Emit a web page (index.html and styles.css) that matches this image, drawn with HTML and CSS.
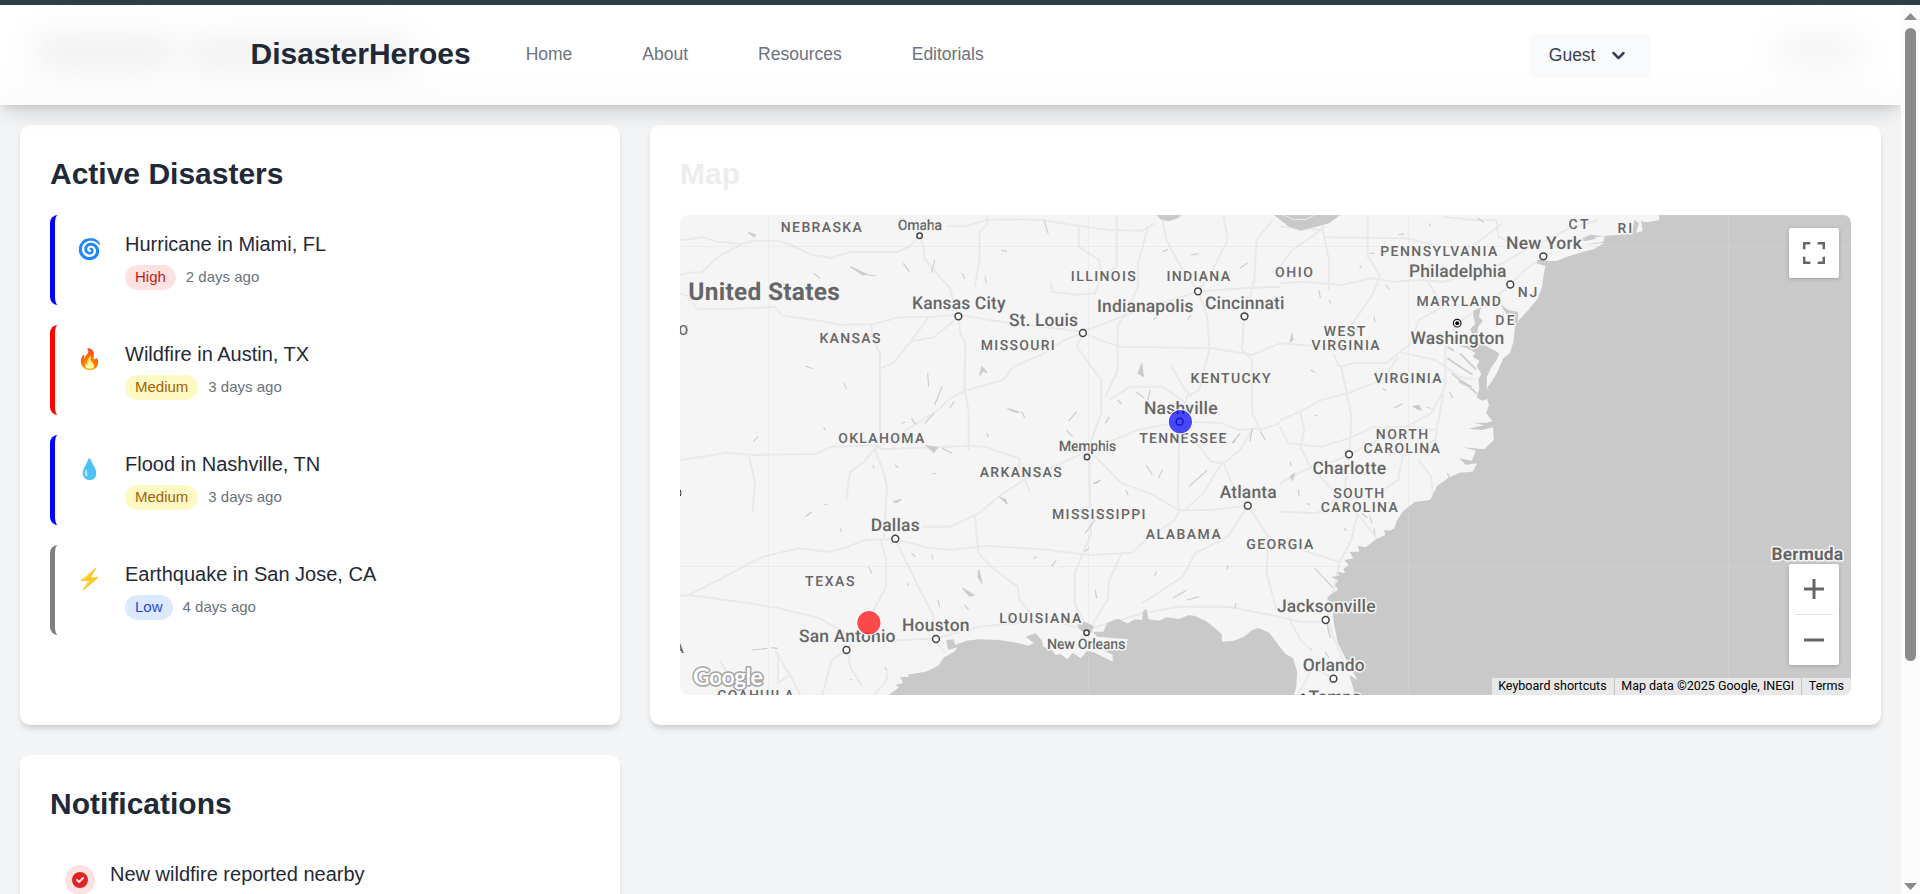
FILE: index.html
```html
<!DOCTYPE html>
<html lang="en">
<head>
<meta charset="utf-8">
<title>DisasterHeroes</title>
<link rel="stylesheet" href="styles.css">
</head>
<body>
<div class="top-strip"></div>
<div class="viewport">
  <div class="page">
    <header class="header">
      <span class="glow glow-left"></span>
      <span class="glow glow-mid"></span>
      <span class="glow glow-right"></span>
      <div class="header-inner">
        <a class="brand">DisasterHeroes</a>
        <nav class="nav">
          <a>Home</a><a>About</a><a>Resources</a><a>Editorials</a>
        </nav>
        <button class="guest">Guest
          <svg width="25" height="25" viewBox="0 0 20 20"><path fill="currentColor" fill-rule="evenodd" d="M5.293 7.293a1 1 0 011.414 0L10 10.586l3.293-3.293a1 1 0 111.414 1.414l-4 4a1 1 0 01-1.414 0l-4-4a1 1 0 010-1.414z"/></svg>
        </button>
      </div>
    </header>

    <main class="grid">
      <section class="card">
        <h2>Active Disasters</h2>
        <div class="list">
          <article class="item item-blue">
            <span class="emoji">🌀</span>
            <div><h3>Hurricane in Miami, FL</h3><p><span class="badge high">High</span>2 days ago</p></div>
          </article>
          <article class="item item-red">
            <span class="emoji">🔥</span>
            <div><h3>Wildfire in Austin, TX</h3><p><span class="badge medium">Medium</span>3 days ago</p></div>
          </article>
          <article class="item item-blue">
            <span class="emoji">💧</span>
            <div><h3>Flood in Nashville, TN</h3><p><span class="badge medium">Medium</span>3 days ago</p></div>
          </article>
          <article class="item item-gray">
            <span class="emoji">⚡</span>
            <div><h3>Earthquake in San Jose, CA</h3><p><span class="badge low">Low</span>4 days ago</p></div>
          </article>
        </div>
      </section>

      <section class="card">
        <h2 class="faint">Map</h2>
        <div class="map">
          <svg class="map-svg" width="1171" height="480" viewBox="680 215 1171 480">
            <rect class="land" x="680" y="215" width="1171" height="480"/>
            <g transform="translate(640 200) scale(.408163 .333333)">
              <!-- Interstates, western half -->
              <g class="road">
                <path d="M98 121 155 112 190 125 250 132 280 122 340 122 375 138 420 165 470 174 515 156 630 156 660 140 685 107"/>
                <path d="M98 224 120 218 152 217 175 190 195 168 250 133"/>
                <path d="M98 280 120 290 140 328 235 326 330 321 350 347 430 360 490 374 570 373 635 352 705 351 780 345 900 368 1085 395"/>
                <path d="M685 107 695 140 697 175 720 210 760 265 765 290 780 349 785 400 797 430 795 570 805 630 805 750"/>
                <path d="M750 79 800 78 850 60 920 58 985 60 1060 75 1150 90 1230 92 1260 70"/>
                <path d="M850 45 850 75 832 95 832 180 820 260"/>
                <path d="M568 373 568 410 588 460 588 710 575 745"/>
                <path d="M588 505 620 490 660 430 705 355M660 425 720 412 780 350"/>
                <path d="M98 780 165 768 210 758 280 765 430 762 470 740 575 735 595 748 800 738 850 740 870 752 930 775 930 800 955 875"/>
                <path d="M1085 399 1040 420 990 460 915 500 890 540 800 570 760 595 730 630 640 700 575 745"/>
                <path d="M268 770 275 810 282 850 275 940"/>
                <path d="M575 745 550 785 515 815 505 900M575 745 598 820 605 860 598 1015"/>
                <path d="M1085 399 1070 440 1130 540 1130 640 1100 740 1105 1000 1065 1120 1065 1210 1085 1260"/>
                <path d="M1085 399 1150 430 1180 440 1400 445 1500 465 1568 430"/>
                <path d="M1005 245 1010 275 1070 284 1115 280 1130 230 1125 180 1075 140 1075 80M1168 45 1168 200 1120 240M1245 80 1220 190 1220 260 1190 340 1170 380 1170 510 1140 590"/>
                <path d="M1280 60 1290 120 1320 190 1367 274 1480 265 1568 260M1367 274 1390 350 1395 445 1370 570 1340 590 1322 665M1367 274 1180 350 1085 395"/>
                <path d="M1480 349 1475 450 1500 480 1500 640 1520 690 1568 670M1430 45 1440 120 1395 230 1367 274M1550 60 1510 120 1505 240 1480 349"/>
                <path d="M1322 665 1220 690 1140 730 940 840 890 880 830 940 760 980 690 980"/>
                <path d="M1322 665 1420 668 1470 690 1520 685M1322 665 1318 900 1320 935"/>
                <path d="M1322 665 1370 740 1400 785 1430 790 1470 750 1500 690M1430 790 1450 850 1489 917"/>
                <path d="M1100 750 1180 850 1250 880 1320 930 1400 930 1489 917M1150 600 1200 560 1280 560 1340 610M1300 495 1330 560 1350 590"/>
                <path d="M98 1187 120 1185 200 1135 300 1070 390 1045 460 1055 500 1045 550 1020 625 1018 700 1042 760 1050 850 1037 1000 1050 1100 1065 1205 1058 1240 1020 1310 960 1320 935"/>
                <path d="M120 1185 260 1208 340 1225 440 1255 505 1300 560 1325 725 1315 830 1280 1000 1260 1094 1290 1230 1240 1320 1220 1440 1220 1568 1250"/>
                <path d="M625 1018 650 1080 690 1180 720 1250 720 1320 750 1360M590 1018 603 1080 603 1160 560 1260 506 1350 470 1380 445 1490"/>
                <path d="M820 945 830 1060 860 1100 925 1160 930 1200 965 1250M1180 1060 1150 1140 1145 1200 1110 1270M1489 917 1440 1010 1360 1060 1330 1130 1230 1210"/>
                <path d="M1489 917 1540 1010 1535 1120 1560 1230M195 1380 220 1430 250 1480M330 1350 370 1430 395 1490M338 1360V1450L365 1425M605 1420 605 1440 570 1490M510 1365 515 1400 545 1460M1330 935 1380 880 1425 790"/>
              </g>
              <!-- Interstates, eastern half -->
              <g class="road" transform="translate(1568 0)">
                <path d="M0 250 60 245 150 255 225 235 280 245 340 240 400 245 470 220 545 190 600 150 645 125 700 90 780 60"/>
                <path d="M0 80 60 85 105 90 120 180 120 270M215 45 215 170 245 225 228 280 170 385 110 440 0 430"/>
                <path d="M0 200 30 150 90 100 110 75M110 112 310 115 400 140 470 140 545 70M400 50 470 60 530 60 535 110 600 150"/>
                <path d="M645 169 600 210 564 254 520 300 434 370 405 430 405 560 370 640 310 680 270 720"/>
                <path d="M360 240 400 320 340 360 320 430 260 490 180 490 145 500 130 460M290 455 380 480 440 530 480 540"/>
                <path d="M0 660 50 635 100 600 165 580 250 540 290 470M150 500 165 590 175 650 170 763M0 680 20 730 100 740 170 715 230 680 280 690 300 720"/>
                <path d="M170 763 240 720 260 680 330 680 380 690M170 763 120 790 60 810 0 850M170 763 160 850 170 910 240 1020"/>
                <path d="M50 640 60 690 50 740 70 790 150 900 190 940M400 580 390 650 380 720 300 770 290 840 240 880M340 780 370 830 375 890"/>
                <path d="M0 935 90 940 170 870M190 940 175 1020 145 1090 130 1180 115 1250 130 1310 155 1380M0 1030 80 1060 145 1085"/>
                <path d="M0 1250 50 1265 112 1265M20 1250 50 1320 75 1350M131 1436 80 1400 60 1450 40 1490"/>
              </g>
              <!-- Small lakes and reservoirs -->
              <path class="lake" d="M265 97l18 8-4 5zM515 200l38 22-6 3zM545 222l33 6M425 220l16 14M645 190l14 24M722 180l-8 38M885 150l14 4M990 60l10 40M790 220l5 16M845 230l4 20M838 500l12 18-10-6-8 14zM705 520l2 40M405 498l18 8M500 550l5 16M740 560l-18 55M770 605l-12 20M720 640l-22 30M665 655l10 18M450 682l4 8M290 710l-12 14M700 735l20 22 10-16M740 745l25 15M905 630l20 8M935 635l8 20M900 625l30 12M1070 635l-20 28M1140 670l10-20M1270 340l-12 20M1350 345l-8 14M1280 155l14-6M1350 165l18-4M1470 205l18-16M1230 490l-10 30 15 10M1250 570l-8 40M1215 575l20 18M1470 700l-20 30 8-6M1500 685l-6 40M1520 695l12 25M1390 810l-45 50M1240 795l15 30M1280 810l-10 25M1130 840l-20 10 12-2M1115 960l-25 40M880 890l20 22-6-16M715 822l10-2M620 905l20-6-14 10M405 950l15-14M450 915l10-3M490 985l4 10M560 1100l8 20M665 1060l10 10M715 1064l2 14M830 1110l8 40-10-20zM790 1165l28 20-10 4zM730 1200l4 22M795 1215l10 14M1020 1080l-12 20M965 1075l8-4M1100 1045l-10 10M1115 1170l4 25M1340 1170l-35 25M1370 1190l-30 10M1265 1115l-4 14M1440 1095l-2 14M1460 1210l-3 16M275 1350l38-5M322 1343l16 2M655 1150l4 8M600 1400l5 12M515 1438l6 2M1230 1420l3 8M570 795l4 10M625 795l8 8M850 700l3 12M640 670l10-4M1045 690l15 20M1170 600l10 12M1190 870l6 16M1440 880l5 14M1500 520l14 10"/>
              <path class="lake" transform="translate(1568 0)" d="M365 70l4 8M290 105l14-4M485 55l14 12M220 160h10M195 198l4 6M95 270l4 24M230 350l3 16M260 255l8 14M190 385l-8 14M120 300l5 10M30 400l-5 25 8-6M75 510l12 8M252 565l8 8M280 625l20-14M325 620l15-4 6 14-12-4M360 620l10 6M85 645l8 2M25 830l10-10-4 20zM45 868l2 20M65 910l8 4M158 985l4 8M200 940l14 14M220 950l6 20M230 985l3 20M25 785l2 14M410 820l6 15M85 1105l45 58M115 1260l3 30 6 25M110 1355l10 18M75 1345l4 6M415 575l8 20M420 520l30 30 20 10"/>
              <!-- Great Lakes -->
              <path class="sea" d="M1262 40H1330L1318 55 1295 64 1275 58Z"/>
              <path class="sea" transform="translate(1568 0)" d="M-15 45H148L120 70 85 82 50 92 22 80Z"/>
              <path class="shore" d="M1568 40 1600 58 1630 59 1655 44"/>
              <!-- Gulf of Mexico -->
              <path class="sea" transform="translate(0 750)" d="M598 745 635 712 625 705 645 698 637 682 660 680 655 674 700 665 730 648 745 622 770 605 778 592 755 600 750 570 768 568 772 585 800 572 830 568 880 570 930 580 950 587 965 580 945 560 970 550 985 572 988 590 1010 600 1018 615 1030 612 1048 628 1060 608 1080 625 1095 602 1110 606 1150 630 1158 636 1158 615 1135 600 1115 598 1190 600 1195 568 1120 560 1110 545 1135 545 1145 518 1170 506 1195 520 1212 508 1230 510 1232 485 1240 475 1246 508 1272 512 1290 502 1320 507 1345 495 1360 498 1385 512 1405 530 1425 552 1426 575 1455 572 1480 560 1500 540 1515 534 1542 548 1555 570 1568 592 1582 612 1600 625 1610 665 1608 710 1600 745Z"/>
              <path class="sea" d="M1070 1275 1090 1265 1112 1278 1105 1300 1080 1292Z"/>
              <!-- Atlantic Ocean -->
              <g transform="translate(1568 0)">
                <path class="sea" d="M929 40V60L900 66 885 60 888 94 872 98 880 70 868 60 862 100 825 105 790 108 760 104 735 118 745 124 795 112 792 125 740 136 795 128 770 147 735 158 700 172 680 182 655 184 632 178 628 190 650 198 646 225 642 260 632 295 610 328 592 352 586 360 576 375 572 425 563 460 547 475 531 520 516 550 509 560 513 590 508 600 512 615 505 640 520 662 508 668 475 668 500 676 462 686 495 690 522 682 524 720 500 748 450 742 480 752 470 782 440 775 455 795 483 790 472 815 440 818 415 832 385 858 368 900 330 906 300 935 285 965 280 985 268 992 255 990 258 1005 235 1018 210 1042 190 1038 195 1055 170 1055 180 1075 158 1080 168 1095 155 1108 160 1120 140 1115 145 1128 125 1130 142 1140 135 1155 142 1170 122 1185 115 1195 128 1215 132 1270 142 1330 165 1385 190 1440 170 1425 185 1490H1500V30Z"/>
                <path class="land" d="M880 50 925 60 912 64 890 66ZM770 112 800 108 780 120ZM465 738 500 730 490 740Z"/>
              </g>
            </g>
            <!-- Chesapeake and Delaware bays -->
            <g transform="translate(1360 210) scale(.333333)">
              <path class="sea" d="M340 302 362 293 357 320 368 332 354 352 352 372 366 400 385 412 418 430 410 450 394 472 381 500 380 530 392 555 384 567 365 572 350 562 358 535 355 508 364 492 350 468 358 452 338 440 346 428 322 415 296 408 345 405 342 382 330 358 346 342 340 320Z"/>
              <path class="sea" d="M420 282 445 300 474 306 474 334 464 348 448 330 436 306Z"/>
              <path class="inlet" d="M262 410 282 422M300 430 325 455 348 478M262 445 300 470 338 494M296 515 325 528 350 550"/>
            </g>
            <path class="graticule" d="M768.6 215V695M1088.6 215V695M1408.6 215V695M1728.6 215V695M680 246.5H1851M680 566.5H1851"/>

            <g class="dots">
              <circle cx="919.6" cy="235.7" r="2.7"/><circle cx="958.4" cy="316.3" r="3.4"/><circle cx="1082.9" cy="333" r="3.4"/>
              <circle cx="1198" cy="291.3" r="3.4"/><circle cx="1244.5" cy="316.3" r="3.4"/><circle cx="1179.6" cy="421.7" r="3.4"/>
              <circle cx="1087" cy="457" r="2.7"/><circle cx="1247.8" cy="505.7" r="3.4"/><circle cx="895.3" cy="538.7" r="3.4"/>
              <circle cx="846.5" cy="650" r="3.4"/><circle cx="936" cy="639" r="3.4"/><circle cx="1086.5" cy="632.7" r="2.7"/>
              <circle cx="1543.3" cy="256.3" r="3.4"/><circle cx="1510.3" cy="284.5" r="3.4"/><circle cx="1349" cy="454.3" r="3.4"/>
              <circle cx="1325.7" cy="620" r="3.4"/><circle cx="1333.5" cy="678.7" r="3.4"/>
              <circle class="capital" cx="1457.2" cy="323.2" r="3.8"/><circle class="capital-core" cx="1457.2" cy="323.2" r="2"/>
            </g>

            <g class="state">
              <text x="780.8" y="231.7" textLength="81">NEBRASKA</text>
              <text x="819.4" y="343" textLength="61">KANSAS</text>
              <text x="980.8" y="350" textLength="74">MISSOURI</text>
              <text x="1070.8" y="281" textLength="65">ILLINOIS</text>
              <text x="1166.5" y="281" textLength="63.5">INDIANA</text>
              <text x="1275" y="277" textLength="38">OHIO</text>
              <text x="1190.6" y="382.5" textLength="80">KENTUCKY</text>
              <text x="1139.3" y="443" textLength="87">TENNESSEE</text>
              <text x="838.2" y="443" textLength="86">OKLAHOMA</text>
              <text x="979.7" y="477.3" textLength="82">ARKANSAS</text>
              <text x="1052" y="519" textLength="93.5">MISSISSIPPI</text>
              <text x="1145.7" y="539.3" textLength="75">ALABAMA</text>
              <text x="1246.3" y="549.3" textLength="67">GEORGIA</text>
              <text x="805" y="586" textLength="49.5">TEXAS</text>
              <text x="999.3" y="623" textLength="82">LOUISIANA</text>
              <text x="717.3" y="699.7" textLength="76.5">COAHUILA</text>
              <text x="678.5" y="335">O</text>
              <text x="674.5" y="652.7">A</text>
              <text x="1568.6" y="228.5" textLength="20">CT</text>
              <text x="1617.6" y="232.5" textLength="14.5">RI</text>
              <text x="1380.2" y="256" textLength="117">PENNSYLVANIA</text>
              <text x="1517.7" y="296.7" textLength="19.5">NJ</text>
              <text x="1416.5" y="306" textLength="84.5">MARYLAND</text>
              <text x="1495.2" y="324.7" textLength="19.5">DE</text>
              <text x="1323.8" y="336" textLength="41.5">WEST</text>
              <text x="1311.6" y="350" textLength="68">VIRGINIA</text>
              <text x="1374" y="382.5" textLength="67.5">VIRGINIA</text>
              <text x="1375.7" y="439" textLength="52.5">NORTH</text>
              <text x="1363.4" y="453" textLength="76.5">CAROLINA</text>
              <text x="1333.2" y="498" textLength="51">SOUTH</text>
              <text x="1320.7" y="512" textLength="77">CAROLINA</text>
            </g>
            <text class="country" x="688.3" y="299.7" textLength="151.5">United States</text>
            <g class="city">
              <text x="912" y="308.7" textLength="93.5">Kansas City</text>
              <text x="1009" y="325.5" textLength="69">St. Louis</text>
              <text x="1097" y="311.5" textLength="96.5">Indianapolis</text>
              <text x="1205" y="308.7" textLength="79.5">Cincinnati</text>
              <text x="1144" y="414" textLength="73.5">Nashville</text>
              <text x="1219.7" y="498" textLength="57">Atlanta</text>
              <text x="870.7" y="531" textLength="49">Dallas</text>
              <text x="799" y="642" textLength="96.5">San Antonio</text>
              <text x="902" y="631" textLength="67.5">Houston</text>
              <text x="1506" y="248.7" textLength="76">New York</text>
              <text x="1409" y="277" textLength="97.5">Philadelphia</text>
              <text x="1410.5" y="343.7" textLength="93.7">Washington</text>
              <text x="1312.5" y="474" textLength="73.5">Charlotte</text>
              <text x="1277" y="612.3" textLength="98.5">Jacksonville</text>
              <text x="1302.7" y="671" textLength="62">Orlando</text>
              <text x="1308.5" y="703" textLength="53">Tampa</text>
              <text class="strong" x="1771.5" y="559.7" textLength="71.5">Bermuda</text>
            </g>
            <circle cx="1303" cy="695.5" r="2" fill="#333"/>
            <g class="town">
              <text x="897.7" y="229.6" textLength="44.5">Omaha</text>
              <text x="1058.7" y="450.7" textLength="57.5">Memphis</text>
              <text x="1047" y="649" textLength="78.5">New Orleans</text>
            </g>
            <path d="M680.4 490q1 3 0 6" stroke="#333" fill="none"/>

            <circle class="event" cx="1180.4" cy="421.7" r="12.2" fill="#00f"/>
            <circle class="event" cx="868.9" cy="622.7" r="12.2" fill="#f00"/>
            <text class="logo" x="693" y="685" textLength="70">Google</text>
          </svg>

          <button class="control fullscreen">
            <svg width="22" height="22" viewBox="0 0 18 18"><path fill="#666" d="M0 0v6h2V2h4V0H0zm16 0h-4v2h4v4h2V0h-2zm0 16h-4v2h6v-6h-2v4zM2 12H0v6h6v-2H2v-4z"/></svg>
          </button>
          <div class="control zoom">
            <svg width="50" height="50" viewBox="0 0 50 50"><path d="M15 25H35M25 15V35" stroke="#666" stroke-width="3"/></svg>
            <span class="rule"></span>
            <svg width="50" height="50" viewBox="0 0 50 50"><path d="M15 25H35" stroke="#666" stroke-width="3"/></svg>
          </div>
          <div class="attribution"><span>Keyboard shortcuts</span><span>Map data ©2025 Google, INEGI</span><span>Terms</span></div>
        </div>
      </section>

      <section class="card">
        <h2>Notifications</h2>
        <div class="notice">
          <span class="notice-icon">
            <svg width="20" height="20" viewBox="0 0 20 20"><path fill="#dc2626" fill-rule="evenodd" d="M10 18a8 8 0 100-16 8 8 0 000 16zm3.707-9.293a1 1 0 00-1.414-1.414L9 10.586 7.707 9.293a1 1 0 00-1.414 1.414l2 2a1 1 0 001.414 0l4-4z"/></svg>
          </span>
          <h3>New wildfire reported nearby</h3>
        </div>
      </section>
    </main>
  </div>

  <div class="scrollbar">
    <svg width="13" height="7" viewBox="0 0 13 7"><path d="M6.5 0 13 7H0Z" fill="#8b8b8b"/></svg>
    <span class="thumb"></span>
    <svg width="13" height="7" viewBox="0 0 13 7"><path d="M0 0H13L6.5 7Z" fill="#8b8b8b"/></svg>
  </div>
</div>
</body>
</html>
```
FILE: styles.css
```css
* { box-sizing: border-box; }

body {
  margin: 0;
  height: 894px;
  overflow: hidden;
  font-family: "Liberation Sans", Arial, sans-serif;
  color: #1f2937;
}

h2, h3, p { margin: 0; }
button { border: 0; font: inherit; }

.top-strip { height: 5px; background: #2b3d45; }
.viewport { display: flex; height: 889px; }

.page {
  flex: 1;
  display: flex;
  flex-direction: column;
  overflow: hidden;
  background: #f3f4f6;
}

/* Header */
.header {
  position: relative;
  z-index: 2;
  flex: none;
  height: 100px;
  padding: 0 250.5px 0 250.5px;
  background: linear-gradient(#fff 60%, #fcfcfc);
  box-shadow: 0 12.5px 19px -4px rgba(0, 0, 0, .12), 0 5px 7.5px -2.5px rgba(0, 0, 0, .1);
}
.header-inner {
  position: relative;
  display: flex;
  align-items: center;
  height: 100px;
}
.glow {
  position: absolute;
  border-radius: 20px;
  background: #f1f1f1;
  filter: blur(15px);
}
.glow-left { left: 32px; top: 28px; width: 145px; height: 38px; }
.glow-mid { left: 180px; top: 30px; width: 235px; height: 38px; background: #f2f2f2; }
.glow-right { left: 1775px; top: 29px; width: 88px; height: 34px; background: #f4f4f4; }

.brand { font-size: 30px; font-weight: 700; line-height: 40px; padding-bottom: 3px; }
.nav {
  display: flex;
  gap: 70px;
  margin-left: 55px;
  padding-bottom: 1px;
  font-size: 17.5px;
  color: #6b7280;
}
.guest {
  display: flex;
  align-items: center;
  gap: 10px;
  height: 45px;
  margin-left: auto;
  padding: 0 20px;
  border-radius: 8px;
  background: #f9fafb;
  color: #374151;
  font-size: 17.5px;
}

/* Cards */
.grid {
  display: grid;
  grid-template-columns: 600px 1231px;
  grid-template-rows: 600px 300px;
  gap: 30px;
  padding: 20px;
}
.card {
  padding: 29px 30px 30px;
  border-radius: 10px;
  background: #fff;
  box-shadow: 0 5px 7.5px -1px rgba(0, 0, 0, .1), 0 2.5px 5px -2px rgba(0, 0, 0, .1);
}
.card h2 { margin-bottom: 21px; font-size: 30px; line-height: 40px; }
.card h2.faint { color: #ededed; }
.card h3 { font-size: 20px; font-weight: 400; line-height: 30px; }

.list { display: flex; flex-direction: column; gap: 20px; }
.item {
  display: flex;
  gap: 20px;
  height: 90px;
  padding: 14px 20px;
  border-left: 5px solid;
  border-radius: 8px;
}
.item-blue { border-color: #00f; }
.item-red { border-color: #f00; }
.item-gray { border-color: #808080; }
.emoji { width: 30px; padding: 5px 1px 0 0; font-size: 20px; line-height: 30px; text-align: center; }
.item p {
  display: flex;
  align-items: flex-start;
  gap: 10px;
  margin-top: 6px;
  color: #6b7280;
  font-size: 15px;
  line-height: 23px;
}
.badge { height: 25px; padding: 0 10px; border-radius: 13px; }
.high { background: #fee2e2; color: #b91c1c; }
.medium { background: #fef9c3; color: #a16207; }
.low { background: #dbeafe; color: #1d4ed8; }

.notice { display: flex; gap: 15px; padding: 15px; }
.notice h3 { margin-top: -1px; }
.notice-icon {
  display: flex;
  align-items: center;
  justify-content: center;
  width: 30px;
  height: 30px;
  margin-top: 5px;
  border-radius: 50%;
  background: #fee2e2;
}

/* Map */
.map {
  position: relative;
  height: 480px;
  overflow: hidden;
  border-radius: 8px;
  font-family: Roboto, sans-serif;
}
.map-svg { display: block; }
.land { fill: #f5f5f5; }
.sea { fill: #c9c9c9; }
.road path { fill: none; stroke: #e9e9e9; stroke-width: 2; stroke-linejoin: round; vector-effect: non-scaling-stroke; }
.lake, .inlet { fill: #c9c9c9; stroke: #cdcdcd; stroke-width: 1.2; vector-effect: non-scaling-stroke; }
.inlet { fill: none; stroke-width: 1.8; }
.shore { fill: none; stroke: #eee; vector-effect: non-scaling-stroke; }
.graticule { fill: none; stroke: #dcdcdc; stroke-opacity: .35; }
.dots circle { fill: #fff; stroke: #444; stroke-width: 1.5; }
.dots .capital { stroke: #111; stroke-width: 1.2; }
.dots .capital-core { fill: #000; stroke: none; }
.map-svg text { fill: #666; stroke: #f5f5f5; stroke-width: 3px; stroke-linejoin: round; paint-order: stroke; text-rendering: geometricPrecision; }
.state text { font-size: 14px; font-weight: 500; }
.city text { font-size: 17.5px; font-weight: 500; }
.city .strong { font-weight: 700; }
.town text { font-size: 14.5px; font-weight: 500; }
.map-svg .country { font-size: 24.5px; font-weight: 700; }
.map-svg .logo { font-family: Lato, sans-serif; font-size: 23.5px; font-weight: 700; fill: #fff; stroke: #a3a3a3; stroke-width: 3px; }
.event { fill-opacity: .7; stroke: #fff; stroke-width: 1.2; }

.control {
  position: absolute;
  right: 12px;
  width: 50px;
  padding: 0;
  border-radius: 2px;
  background: #fff;
  box-shadow: 0 1px 5px -1px rgba(0, 0, 0, .3);
}
.fullscreen { top: 13px; display: flex; align-items: center; justify-content: center; height: 50px; }
.zoom { top: 349px; display: flex; flex-direction: column; height: 101px; }
.rule { height: 1px; margin: 0 6px; background: #e3e3e3; }
.attribution {
  position: absolute;
  right: 0;
  bottom: 0;
  display: flex;
  height: 17px;
  background: #e8e8e8;
  color: #000;
  font-size: 12.5px;
  line-height: 16px;
  white-space: nowrap;
}
.attribution span { padding: 0 7px 0 6.6px; }
.attribution span + span { border-left: 1px solid #c4c4c4; }

/* Scrollbar */
.scrollbar {
  display: flex;
  flex-direction: column;
  align-items: center;
  width: 19px;
  padding: 8px 0 4px;
  background: #fcfcfc;
}
.thumb { width: 11px; height: 633px; margin: 8px 0 auto; border-radius: 6px; background: #8b8b8b; }
```
